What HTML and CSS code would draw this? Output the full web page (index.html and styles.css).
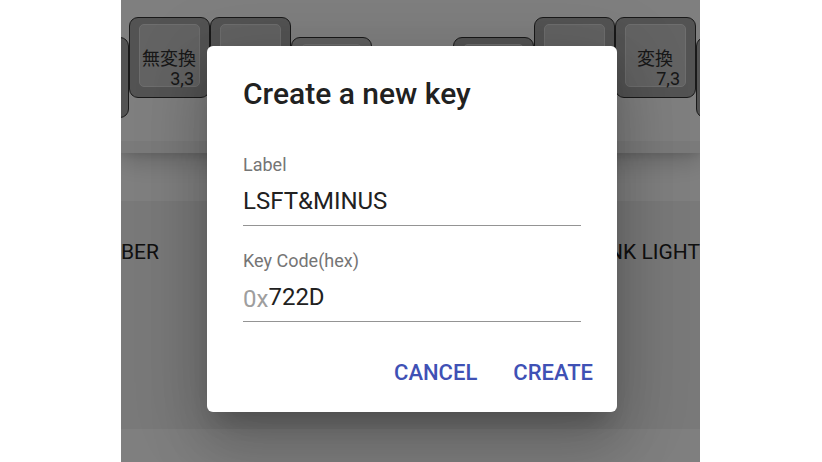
FILE: index.html
```html
<!DOCTYPE html>
<html lang="en">
<head>
<meta charset="utf-8">
<title>Create a new key</title>
<link rel="stylesheet" href="styles.css">
</head>
<body>
<div class="stage">
  <div class="page">
    <section class="keyboard">
      <div class="keys">
        <div class="key low"><div class="cap"></div></div>
        <div class="key"><div class="cap"><span class="legend" lang="ja">無変換</span><span class="pos">3,3</span></div></div>
        <div class="key"><div class="cap"></div></div>
        <div class="key low light"><div class="cap"></div></div>
        <div class="key low after-gap"><div class="cap"></div></div>
        <div class="key"><div class="cap"></div></div>
        <div class="key"><div class="cap"><span class="legend" lang="ja">変換</span><span class="pos">7,3</span></div></div>
        <div class="key low"><div class="cap"></div></div>
      </div>
    </section>
    <section class="tabs"><span>BER</span><span>NK LIGHT</span></section>
  </div>
  <div class="scrim">
    <form class="dialog" role="dialog" aria-labelledby="title">
      <h2 id="title">Create a new key</h2>
      <div class="fields">
        <div class="field">
          <label for="label">Label</label>
          <div class="entry"><input id="label" type="text" value="LSFT&amp;MINUS"></div>
        </div>
        <div class="field">
          <label for="code">Key Code(hex)</label>
          <div class="entry"><span class="prefix">0x</span><input id="code" type="text" value="722D"></div>
        </div>
      </div>
      <div class="actions">
        <button type="button">CANCEL</button>
        <button type="button">CREATE</button>
      </div>
    </form>
  </div>
</div>
</body>
</html>
```
FILE: styles.css
```css
* { box-sizing: border-box; }
body {
  margin: 0;
  padding: 0 122px 0 121px;
  background: #fff;
  color: #212121;
  font-family: Roboto, "Noto Sans CJK JP", sans-serif;
}
.stage {
  display: grid;
  min-height: 100vh;
  overflow: hidden;
}
.page, .scrim {
  grid-area: 1 / 1;
  min-width: 0;
}
.page {
  display: flex;
  flex-direction: column;
  overflow: hidden;
  background: #fff;
}
.keyboard {
  padding: 17px 0 18px;
  border-bottom: 12px solid #f5f5f5;
  box-shadow: 0 2px 8px rgba(0, 0, 0, .1), 0 8px 24px rgba(0, 0, 0, .2);
}
.keys {
  display: flex;
  height: 106px;
  margin-left: -73px;
}
.key {
  flex: none;
  width: 81px;
  height: 81px;
  padding: 6px 9px 10px;
  border: 1px solid #333;
  border-radius: 9px;
  background: #a6a6a6;
}
.low { margin-top: 20px; }
.light { background: #c0c0c0; }
.after-gap { margin-left: 81px; }
.cap {
  display: flex;
  flex-direction: column;
  height: 63px;
  padding: 24px 5px 0 0;
  border: 1px solid #dcdcdc;
  border-radius: 5px;
  background: #c6c6c6;
  color: #303030;
  font-size: 18px;
  line-height: 20px;
}
.legend {
  margin-right: -4px;
  text-align: center;
  white-space: nowrap;
}
.pos { text-align: right; }
.tabs {
  display: flex;
  justify-content: space-between;
  height: 228px;
  margin: 48px 0 33px;
  padding-top: 39px;
  background: #f2f2f2;
  font-size: 21px;
  line-height: 24px;
}
.scrim {
  position: relative;
  display: grid;
  place-items: start center;
  padding: 46px 0 50px 3px;
  background: rgba(0, 0, 0, .5);
}
.dialog {
  width: 71%;
  min-width: 410px;
  border-radius: 6px;
  background: #fff;
  box-shadow: 0 16px 22px -10px rgba(0, 0, 0, .2), 0 36px 57px 4px rgba(0, 0, 0, .14), 0 13px 69px 12px rgba(0, 0, 0, .12);
}
h2 {
  margin: 0;
  padding: 24px 36px;
  font-size: 30px;
  font-weight: 500;
  line-height: 48px;
}
.fields {
  display: grid;
  gap: 24px;
  padding: 12px 36px;
}
.field {
  height: 72px;
  border-bottom: 1px solid #949494;
}
label {
  display: block;
  color: #757575;
  font-size: 18px;
  line-height: 22px;
}
.entry {
  display: flex;
  align-items: center;
  height: 50px;
}
.prefix {
  padding-top: 4px;
  color: #9e9e9e;
  font-size: 24px;
  line-height: 28px;
}
input {
  flex: 1;
  min-width: 0;
  padding: 0;
  border: 0;
  outline: 0;
  background: none;
  color: #212121;
  font: 24px/28px Roboto, sans-serif;
}
.actions {
  display: flex;
  justify-content: flex-end;
  gap: 12px;
  padding: 12px;
}
button {
  height: 54px;
  padding: 0 12px;
  border: 0;
  border-radius: 6px;
  background: none;
  color: #3f51b5;
  font: 500 22px/36px Roboto, sans-serif;
}
```
